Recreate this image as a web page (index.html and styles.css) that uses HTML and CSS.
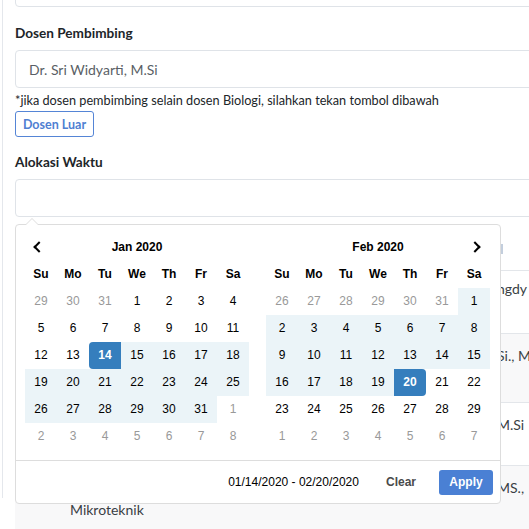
FILE: index.html
```html
<!DOCTYPE html>
<html>
<head>
<meta charset="utf-8">
<link rel="stylesheet" href="styles.css">
</head>
<body>
<div class="page">
  <div class="input input-top"></div>

  <div class="group">
    <div class="label">Dosen Pembimbing</div>
    <div class="input"><span class="value">Dr. Sri Widyarti, M.Si</span></div>
    <div class="help">*jika dosen pembimbing selain dosen Biologi, silahkan tekan tombol dibawah</div>
    <button class="btn-outline">Dosen Luar</button>
  </div>

  <div class="group group-time">
    <div class="label">Alokasi Waktu</div>
    <div class="input"></div>

    <div class="drp">
      <div class="drp-cals">
        <table class="cal">
          <thead>
            <tr><th class="nav"><span class="chev prev"></span></th><th colspan="5" class="month">Jan 2020</th><th></th></tr>
            <tr class="dow"><th>Su</th><th>Mo</th><th>Tu</th><th>We</th><th>Th</th><th>Fr</th><th>Sa</th></tr>
          </thead>
          <tbody>
            <tr><td class="off">29</td><td class="off">30</td><td class="off">31</td><td>1</td><td>2</td><td>3</td><td>4</td></tr>
            <tr><td>5</td><td>6</td><td>7</td><td>8</td><td>9</td><td>10</td><td>11</td></tr>
            <tr><td>12</td><td>13</td><td class="start">14</td><td class="in">15</td><td class="in">16</td><td class="in">17</td><td class="in">18</td></tr>
            <tr><td class="in">19</td><td class="in">20</td><td class="in">21</td><td class="in">22</td><td class="in">23</td><td class="in">24</td><td class="in">25</td></tr>
            <tr><td class="in">26</td><td class="in">27</td><td class="in">28</td><td class="in">29</td><td class="in">30</td><td class="in">31</td><td class="off">1</td></tr>
            <tr><td class="off">2</td><td class="off">3</td><td class="off">4</td><td class="off">5</td><td class="off">6</td><td class="off">7</td><td class="off">8</td></tr>
          </tbody>
        </table>
        <table class="cal">
          <thead>
            <tr><th></th><th colspan="5" class="month">Feb 2020</th><th class="nav"><span class="chev next"></span></th></tr>
            <tr class="dow"><th>Su</th><th>Mo</th><th>Tu</th><th>We</th><th>Th</th><th>Fr</th><th>Sa</th></tr>
          </thead>
          <tbody>
            <tr><td class="off">26</td><td class="off">27</td><td class="off">28</td><td class="off">29</td><td class="off">30</td><td class="off">31</td><td class="in">1</td></tr>
            <tr><td class="in">2</td><td class="in">3</td><td class="in">4</td><td class="in">5</td><td class="in">6</td><td class="in">7</td><td class="in">8</td></tr>
            <tr><td class="in">9</td><td class="in">10</td><td class="in">11</td><td class="in">12</td><td class="in">13</td><td class="in">14</td><td class="in">15</td></tr>
            <tr><td class="in">16</td><td class="in">17</td><td class="in">18</td><td class="in">19</td><td class="end">20</td><td>21</td><td>22</td></tr>
            <tr><td>23</td><td>24</td><td>25</td><td>26</td><td>27</td><td>28</td><td>29</td></tr>
            <tr><td class="off">1</td><td class="off">2</td><td class="off">3</td><td class="off">4</td><td class="off">5</td><td class="off">6</td><td class="off">7</td></tr>
          </tbody>
        </table>
      </div>
      <div class="drp-buttons">
        <span class="selected">01/14/2020 - 02/20/2020</span>
        <button class="btn-clear">Clear</button>
        <button class="btn-apply">Apply</button>
      </div>
    </div>
  </div>

  <table class="list">
    <tr class="r0"><td class="c1"></td><td class="c2"></td><td class="c3"><span class="sortbar"></span></td></tr>
    <tr class="r1"><td class="c1"></td><td class="c2"></td><td class="c3">ngdy</td></tr>
    <tr class="r2 stripe"><td class="c1"></td><td class="c2"></td><td class="c3">Si., M</td></tr>
    <tr class="r3"><td class="c1"></td><td class="c2"></td><td class="c3">M.Si</td></tr>
    <tr class="r4 stripe"><td class="c1"></td><td class="c2"><span class="hidden-line">Praktikum</span><br>Mikroteknik</td><td class="c3">MS.,</td></tr>
  </table>
</div>
</body>
</html>
```
FILE: styles.css
```css
html, body {
  margin: 0;
  padding: 0;
  background: #fff;
  overflow: hidden;
}
body {
  font-family: Lato, "Open Sans", sans-serif;
  color: #212529;
  width: 529px;
  height: 529px;
}
.page {
  margin-left: 2px;
  border-left: 1px solid #e4e7ec;
  padding-left: 12px;
  height: 529px;
  width: 514px;
}
.input {
  box-sizing: border-box;
  height: 38px;
  border: 1px solid #dfe3e8;
  border-radius: 4px;
  width: 560px;
  display: flex;
  align-items: center;
  padding-left: 13px;
}
.input-top {
  margin-top: -31px;
}
.group {
  padding-top: 15px;
}
.label {
  font-weight: 700;
  font-size: 13.6px;
  line-height: 22px;
  margin-bottom: 6px;
}
.value {
  font-size: 14px;
  color: #5a5f66;
}
.help {
  font-size: 12.7px;
  line-height: 20px;
  margin-top: 2px;
}
.btn-outline {
  margin-top: 1px;
  font-family: inherit;
  font-size: 12.5px;
  font-weight: 700;
  color: #4f80d2;
  background: #fff;
  border: 1px solid #5585d6;
  border-radius: 3px;
  height: 26px;
  width: 79px;
  padding: 0;
  display: block;
}
.group-time {
  position: relative;
  padding-top: 14px;
}
.list {
  border-collapse: collapse;
  table-layout: fixed;
  width: 560px;
  margin-top: 11px;
  font-size: 14px;
  color: #3a3f45;
}
.list td {
  padding: 11px 12px 0;
  vertical-align: top;
  line-height: 22px;
  border-top: 1px solid #e3e6ea;
  box-sizing: border-box;
  overflow: hidden;
  white-space: nowrap;
}
.list .r0 td { border-top: none; height: 42px; }
.list .r1 td { height: 63px; padding-top: 7px; }
.list .r2 td { height: 69px; }
.list .r3 td { height: 63px; }
.list .r4 td { height: 70px; }
.list .stripe { background: #f8f8f9; }
.list .c1 { width: 55px; }
.list .c2 { width: 415px; padding-left: 0; }
.list .c3 { width: 90px; padding-left: 12px; }
.hidden-line { visibility: hidden; }
.sortbar {
  display: inline-block;
  width: 2px;
  height: 10px;
  background: #c3cedd;
  margin-left: 4px;
  margin-top: 5px;
  vertical-align: top;
}

/* date range picker */
.drp {
  position: absolute;
  top: 87px;
  left: 0;
  box-sizing: border-box;
  width: 486px;
  background: #fff;
  border: 1px solid #ddd;
  border-radius: 4px;
  font-family: "Liberation Sans", Arial, sans-serif;
  font-size: 12px;
  color: #000;
  z-index: 5;
}
.drp::before {
  content: "";
  position: absolute;
  top: -7px;
  left: 9px;
  border-left: 7px solid transparent;
  border-right: 7px solid transparent;
  border-bottom: 7px solid #ddd;
}
.drp::after {
  content: "";
  position: absolute;
  top: -6px;
  left: 10px;
  border-left: 6px solid transparent;
  border-right: 6px solid transparent;
  border-bottom: 6px solid #fff;
}
.drp-cals {
  display: flex;
  gap: 17px;
  padding: 9px 9px 10px 9px;
}
.cal {
  border-collapse: collapse;
  border-spacing: 0;
}
.cal th, .cal td {
  width: 32px;
  min-width: 32px;
  height: 27px;
  padding: 0;
  text-align: center;
  vertical-align: middle;
  line-height: 27px;
  white-space: nowrap;
}
.cal th {
  font-weight: 700;
}
.cal .off { color: #999; }
.cal .in { background: #ebf4f8; }
.cal .start, .cal .end {
  background: #357ebd;
  color: #fff;
  font-weight: 700;
}
.cal .start { border-radius: 4px 0 0 4px; }
.cal .end { border-radius: 0 4px 4px 0; }
.chev {
  display: inline-block;
  border: solid #000;
  border-width: 0 2px 2px 0;
  padding: 3px;
}
.chev.prev { transform: rotate(135deg); margin-left: -4px; }
.chev.next { transform: rotate(-45deg); margin-left: 2px; }
.drp-buttons {
  border-top: 1px solid #ddd;
  display: flex;
  align-items: center;
  justify-content: flex-end;
  height: 42px;
  padding: 0 7px 0 8px;
}
.selected {
  font-size: 12px;
  margin-right: 18px;
}
.btn-clear, .btn-apply {
  font-family: "Liberation Sans", Arial, sans-serif;
  font-size: 12px;
  height: 25px;
  border-radius: 3px;
  border: 1px solid transparent;
}
.btn-clear {
  background: transparent;
  color: #4a4a4a;
  font-weight: 700;
  padding: 0 8px;
}
.btn-apply {
  background: #4a80d4;
  color: #fff;
  font-weight: 700;
  margin-left: 14px;
  width: 54px;
  padding: 0;
}
```
